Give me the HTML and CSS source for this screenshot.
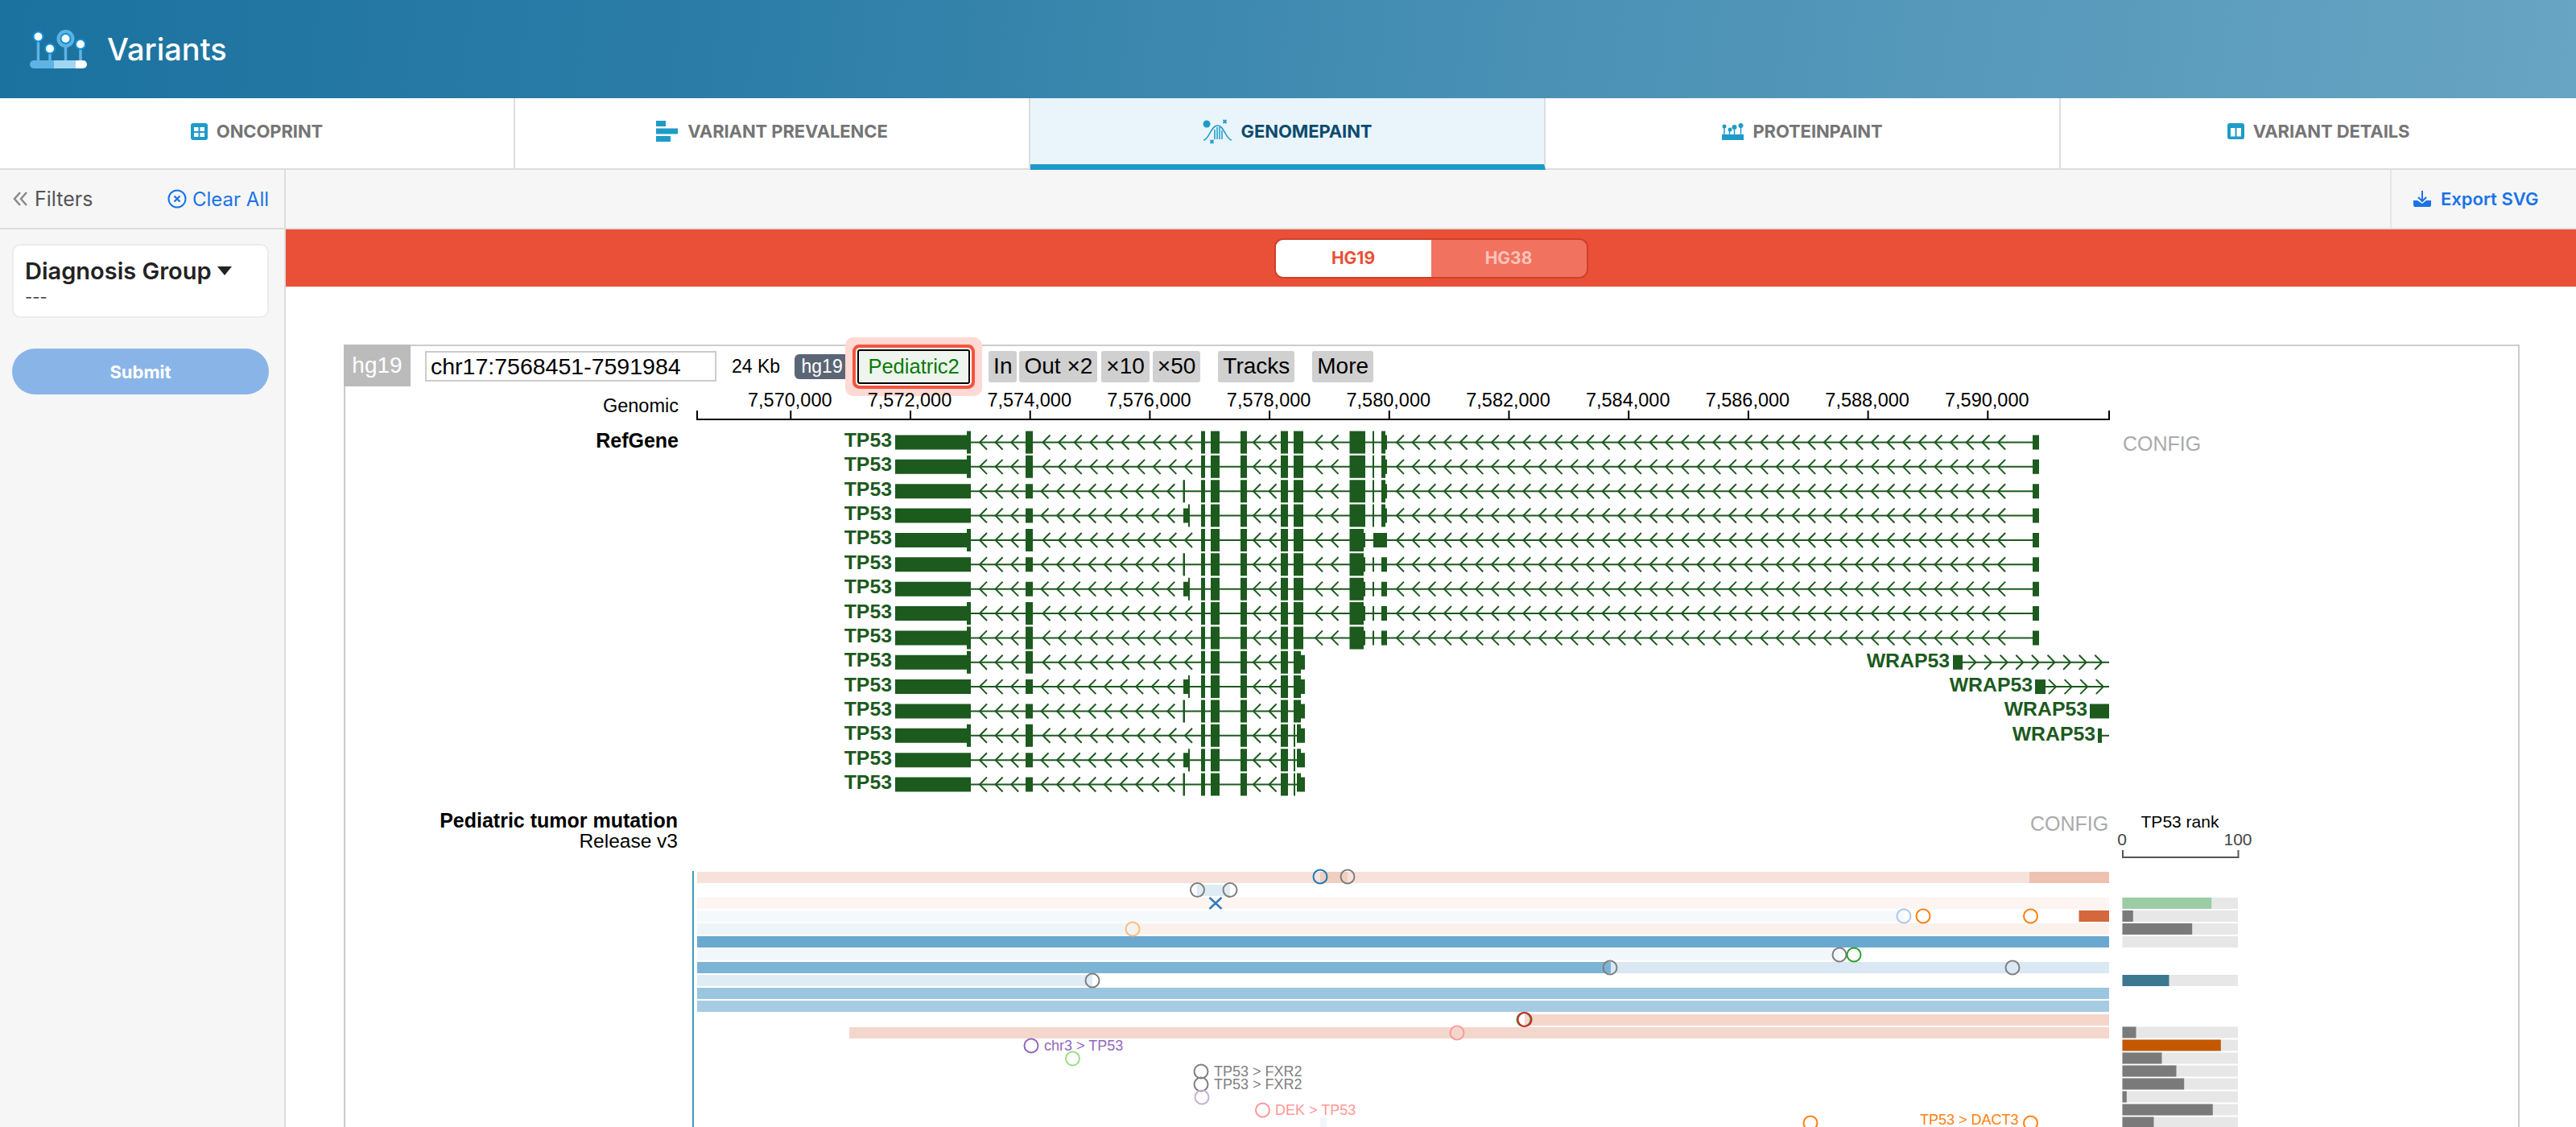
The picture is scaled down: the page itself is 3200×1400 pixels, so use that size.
FILE: index.html
```html
<!DOCTYPE html>
<html lang="en">
<head>
<meta charset="utf-8">
<title>Variants</title>
<link rel="stylesheet" href="styles.css">
</head>
<body>
<header class="app-header">
  <svg class="logo" width="72" height="48" viewBox="37 36 72 48">
    <g class="logo-stem"><path d="M47.500 48V75M62 64V75M81.500 56V75M100 60V75"/></g>
    <circle class="logo-halo" cx="81.500" cy="47" r="11"/>
    <circle class="logo-dot" cx="47.500" cy="44.500" r="6"/>
    <circle class="logo-dot" cx="62" cy="59.500" r="6"/>
    <circle class="logo-dot" cx="81.500" cy="47" r="6"/>
    <circle class="logo-dot" cx="100" cy="54" r="6"/>
    <path class="logo-a" d="M42 74H67V84H42a5 5 0 0 1 0-10Z"/>
    <rect class="logo-b" x="67" y="74" width="27" height="10"/>
    <path class="logo-c" d="M94 74H103a5 5 0 0 1 0 10H94Z"/>
  </svg>
  <h1 class="app-title">Variants</h1>
</header>

<nav class="tabs">
  <a class="tab">
    <svg class="tab-icon" width="21" height="21" viewBox="0 0 21 21"><rect class="ic-fill" width="21" height="21" rx="3"/><path class="ic-cut" d="M4 5h5.500v5H4zM11.500 5H17v5h-5.500zM4 12h5.500v5H4zM11.500 12H17v5h-5.500z"/></svg>
    <span>ONCOPRINT</span>
  </a>
  <a class="tab">
    <svg class="tab-icon" width="28" height="27" viewBox="0 0 28 27"><path class="ic-fill" d="M0 0h12v7H0zM0 9.500h27v7H0zM0 19h18v7H0z"/></svg>
    <span>VARIANT PREVALENCE</span>
  </a>
  <a class="tab tab-active">
    <svg class="tab-icon" width="37" height="31" viewBox="0 0 37 31">
      <circle class="ic-fill" cx="5" cy="6" r="4.500"/>
      <path class="ic-line" d="M1 26C8 26 10 8 18.500 8S29 26 36 26M15 13V25M18 10V25M21 10V25M24 14V25"/>
      <path class="ic-x" d="M25.500 1l4 4M29.500 1l-4 4M9.500 26l4 4M13.500 26l-4 4"/>
    </svg>
    <span>GENOMEPAINT</span>
  </a>
  <a class="tab">
    <svg class="tab-icon" width="27" height="21" viewBox="0 0 27 21">
      <path class="ic-fill" d="M0 14h27v7H0z"/>
      <path class="ic-line" d="M3 3V14M9.500 9V14M15.500 6V14M23.500 4V14"/>
      <circle class="ic-fill" cx="3" cy="4" r="2.500"/><circle class="ic-fill" cx="10" cy="8" r="2.500"/><circle class="ic-fill" cx="15.500" cy="5" r="3"/><circle class="ic-fill" cx="23.500" cy="3" r="3"/>
    </svg>
    <span>PROTEINPAINT</span>
  </a>
  <a class="tab tab-last">
    <svg class="tab-icon" width="21" height="20" viewBox="0 0 21 20"><rect class="ic-fill" width="21" height="20" rx="3"/><path class="ic-cut" d="M4 6h5.500v10.500H4zM11.500 6H17v10.500h-5.500z"/></svg>
    <span>VARIANT DETAILS</span>
  </a>
</nav>

<div class="workspace">
  <aside class="sidebar">
    <div class="filter-head">
      <span class="filter-title">
        <svg width="19" height="20" viewBox="0 0 19 20"><path class="dbl-chev" d="M9 2L2 10l7 8M17 2l-7 8 7 8"/></svg>
        Filters
      </span>
      <span class="clear-all">
        <svg width="24" height="24" viewBox="0 0 24 24"><circle class="clear-ring" cx="12" cy="12" r="10.500"/><path class="clear-x" d="M8.500 8.500l7 7M15.500 8.500l-7 7"/></svg>
        Clear All
      </span>
    </div>
    <div class="filter-body">
      <div class="filter-card">
        <div class="filter-name">Diagnosis Group<i class="caret"></i></div>
        <div class="filter-value">---</div>
      </div>
      <button class="submit">Submit</button>
    </div>
  </aside>

  <main class="content">
    <div class="action-bar">
      <span class="export">
        <svg width="22" height="20" viewBox="0 0 22 20"><path class="export-arrow" d="M11 0V12M6 8l5 5 5-5"/><path class="export-tray" d="M0 12h5l6 4 5-4h6v6a2 2 0 0 1-2 2H2a2 2 0 0 1-2-2Z"/></svg>
        Export SVG
      </span>
    </div>
    <div class="genome-band">
      <div class="genome-toggle">
        <span class="genome-opt genome-opt-on">HG19</span>
        <span class="genome-opt">HG38</span>
      </div>
    </div>
    <section class="stage">
      <div class="pp-box">
        <div class="pp-toolbar">
          <span class="pp-genome">hg19</span>
          <input class="pp-coord" value="chr17:7568451-7591984">
          <span class="pp-span">24 Kb</span>
          <span class="pp-badge">hg19</span>
          <span class="pp-ds">Pediatric2</span>
          <span class="pp-btn pp-in">In</span>
          <span class="pp-btn pp-out">Out ×2</span>
          <span class="pp-btn pp-x10">×10</span>
          <span class="pp-btn pp-x50">×50</span>
          <span class="pp-btn pp-tracks">Tracks</span>
          <span class="pp-btn pp-more">More</span>
        </div>
        <svg class="pp-chart" width="2699" height="920" viewBox="429 480 2699 920">
          <defs>
            <path id="chev3" class="gl" d="M1226-9l-9 9 9 9m19.600-18l-9 9 9 9m19.600-18l-9 9 9 9"/>
            <path id="chev9" class="gl" d="M1304.500-9l-9 9 9 9m19.600-18l-9 9 9 9m19.600-18l-9 9 9 9m19.600-18l-9 9 9 9m19.600-18l-9 9 9 9m19.600-18l-9 9 9 9m19.600-18l-9 9 9 9m19.600-18l-9 9 9 9m19.600-18l-9 9 9 9"/>
            <path id="chev-mid" class="gl" d="M1566-9l-9 9 9 9m19.600-18l-9 9 9 9"/>
            <path id="chev-long" class="gl" d="M1744-9l-9 9 9 9m19.660-18l-9 9 9 9m19.660-18l-9 9 9 9m19.660-18l-9 9 9 9m19.660-18l-9 9 9 9m19.660-18l-9 9 9 9m19.660-18l-9 9 9 9m19.660-18l-9 9 9 9m19.660-18l-9 9 9 9m19.660-18l-9 9 9 9m19.660-18l-9 9 9 9m19.660-18l-9 9 9 9m19.660-18l-9 9 9 9m19.660-18l-9 9 9 9m19.660-18l-9 9 9 9m19.660-18l-9 9 9 9m19.660-18l-9 9 9 9m19.660-18l-9 9 9 9m19.660-18l-9 9 9 9m19.660-18l-9 9 9 9m19.660-18l-9 9 9 9m19.660-18l-9 9 9 9m19.660-18l-9 9 9 9m19.660-18l-9 9 9 9m19.660-18l-9 9 9 9m19.660-18l-9 9 9 9m19.660-18l-9 9 9 9m19.660-18l-9 9 9 9m19.660-18l-9 9 9 9m19.660-18l-9 9 9 9m19.660-18l-9 9 9 9m19.660-18l-9 9 9 9m19.660-18l-9 9 9 9m19.660-18l-9 9 9 9m19.660-18l-9 9 9 9m19.660-18l-9 9 9 9m19.660-18l-9 9 9 9m19.660-18l-9 9 9 9m19.660-18l-9 9 9 9"/>

            <g id="left-a">
              <path class="gl" d="M1206 0H1482"/>
              <path class="gf" d="M1112-9H1201V-14H1206V14H1201V9H1112ZM1274-14h9V14h-9Z"/>
              <use href="#chev3"/><use href="#chev9"/>
              <path class="gl" d="M1481-9l-9 9 9 9"/>
            </g>
            <g id="left-b">
              <path class="gl" d="M1206 0H1482"/>
              <path class="gf" d="M1112-9H1206V9H1112ZM1274-9h9V9h-9ZM1469.500-14h2.500V14h-2.500Z"/>
              <use href="#chev3"/><use href="#chev9" x="-2"/>
            </g>
            <g id="left-c">
              <path class="gl" d="M1206 0H1482"/>
              <path class="gf" d="M1112-9H1206V9H1112ZM1274-9h9V9h-9ZM1470-9h6V-14h2V14h-2V9h-6Z"/>
              <use href="#chev3"/><use href="#chev9" x="-2"/>
            </g>
            <g id="mid">
              <path class="gl" d="M1482 0H1591"/>
              <path class="gf" d="M1492-14h5V14h-5ZM1504-14h11V14h-11ZM1541-14h8V14h-8ZM1591-14h9V14h-9Z"/>
              <use href="#chev-mid"/>
            </g>
            <g id="long">
              <path class="gl" d="M1600 0H2525"/>
              <path class="gf" d="M1607-14h12V14h-12ZM2525-9h8V9h-8Z"/>
              <use href="#chev-mid" x="77"/>
              <use href="#chev-long"/>
            </g>
            <g id="end-a"><path class="gf" d="M1676.500-14H1696V14H1676.500ZM1705-14h2V14h-2ZM1716-14h5V-9h2V9h-2V14h-5Z"/></g>
            <g id="end-b"><path class="gf" d="M1676.500-14H1694V-9h2V9h-2V14H1676.500ZM1706-9h17V9h-17Z"/></g>
            <g id="end-c"><path class="gf" d="M1676.500-14H1694V-9h2V9h-2V14H1676.500ZM1705-9h2V9h-2ZM1716-9h7V9h-7Z"/></g>
            <g id="short-a">
              <path class="gl" d="M1600 0H1607"/>
              <path class="gf" d="M1607-14H1616V-9H1621V9H1616V14H1607Z"/>
            </g>
            <g id="short-b">
              <path class="gl" d="M1600 0H1611"/>
              <path class="gf" d="M1607-14h2V14h-2ZM1611-14H1616V-9H1621V9H1611Z"/>
            </g>
            <text id="tp53" class="gene-name" x="1108" y="5.500">TP53</text>
          </defs>

          <!-- genomic ruler -->
          <text class="track-label" x="843" y="512">Genomic</text>
          <path class="ruler" d="M866 510V521H2620V510M982.300 510V521M1131 510V521M1279.700 510V521M1428.400 510V521M1577.100 510V521M1725.800 510V521M1874.500 510V521M2023.200 510V521M2171.900 510V521M2320.600 510V521M2469.300 510V521"/>
          <g class="ruler-text">
            <text x="981.300" y="504.500">7,570,000</text><text x="1130" y="504.500">7,572,000</text><text x="1278.700" y="504.500">7,574,000</text><text x="1427.400" y="504.500">7,576,000</text><text x="1576.100" y="504.500">7,578,000</text><text x="1724.800" y="504.500">7,580,000</text><text x="1873.500" y="504.500">7,582,000</text><text x="2022.200" y="504.500">7,584,000</text><text x="2170.900" y="504.500">7,586,000</text><text x="2319.600" y="504.500">7,588,000</text><text x="2468.300" y="504.500">7,590,000</text>
          </g>

          <!-- RefGene -->
          <text class="track-label track-label-b" x="843" y="556">RefGene</text>
          <text class="config" x="2637" y="560">CONFIG</text>
          <g transform="translate(0 549.500)"><use href="#tp53"/><use href="#left-a"/><use href="#mid"/><use href="#long"/><use href="#end-a"/></g>
          <g transform="translate(0 579.860)"><use href="#tp53"/><use href="#left-a"/><use href="#mid"/><use href="#long"/><use href="#end-a"/></g>
          <g transform="translate(0 610.220)"><use href="#tp53"/><use href="#left-b"/><use href="#mid"/><use href="#long"/><use href="#end-a"/></g>
          <g transform="translate(0 640.580)"><use href="#tp53"/><use href="#left-c"/><use href="#mid"/><use href="#long"/><use href="#end-a"/></g>
          <g transform="translate(0 670.940)"><use href="#tp53"/><use href="#left-a"/><use href="#mid"/><use href="#long"/><use href="#end-b"/></g>
          <g transform="translate(0 701.300)"><use href="#tp53"/><use href="#left-b"/><use href="#mid"/><use href="#long"/><use href="#end-c"/></g>
          <g transform="translate(0 731.660)"><use href="#tp53"/><use href="#left-c"/><use href="#mid"/><use href="#long"/><use href="#end-c"/></g>
          <g transform="translate(0 762.020)"><use href="#tp53"/><use href="#left-a"/><use href="#mid"/><use href="#long"/><use href="#end-c"/></g>
          <g transform="translate(0 792.380)"><use href="#tp53"/><use href="#left-a"/><use href="#mid"/><use href="#long"/><use href="#end-c"/></g>
          <g transform="translate(0 822.740)"><use href="#tp53"/><use href="#left-a"/><use href="#mid"/><use href="#short-a"/>
            <text class="gene-name" x="2422" y="6">WRAP53</text>
            <path class="gf" d="M2426-9h12V9h-12Z"/>
            <path class="gl" d="M2438 0H2620M2445.500-9l9 9-9 9m19.600-18l9 9-9 9m19.600-18l9 9-9 9m19.600-18l9 9-9 9m19.600-18l9 9-9 9m19.600-18l9 9-9 9m19.600-18l9 9-9 9m19.600-18l9 9-9 9m19.600-18l9 9-9 9"/>
          </g>
          <g transform="translate(0 853.100)"><use href="#tp53"/><use href="#left-c"/><use href="#mid"/><use href="#short-a"/>
            <text class="gene-name" x="2525" y="6">WRAP53</text>
            <path class="gf" d="M2528-9h13V9h-13Z"/>
            <path class="gl" d="M2541 0H2620M2545-9l9 9-9 9m19.600-18l9 9-9 9m19.600-18l9 9-9 9m19.600-18l9 9-9 9"/>
          </g>
          <g transform="translate(0 883.460)"><use href="#tp53"/><use href="#left-b"/><use href="#mid"/><use href="#short-a"/>
            <text class="gene-name" x="2593" y="6">WRAP53</text>
            <path class="gf" d="M2596-9h24V9h-24Z"/>
          </g>
          <g transform="translate(0 913.820)"><use href="#tp53"/><use href="#left-a"/><use href="#mid"/><use href="#short-b"/>
            <text class="gene-name" x="2603" y="6">WRAP53</text>
            <path class="gf" d="M2606-9h5V9h-5Z"/>
            <path class="gl" d="M2611 0H2620"/>
          </g>
          <g transform="translate(0 944.180)"><use href="#tp53"/><use href="#left-c"/><use href="#mid"/><use href="#short-b"/></g>
          <g transform="translate(0 974.540)"><use href="#tp53"/><use href="#left-b"/><use href="#mid"/><use href="#short-b"/></g>

          <!-- mutation track -->
          <text class="track-label track-label-b" x="842" y="1028">Pediatric tumor mutation</text>
          <text class="track-label track-label-r" x="842" y="1053">Release v3</text>
          <text class="config" x="2522" y="1032">CONFIG</text>
          <path class="track-axis" d="M861 1082V1400"/>

          <rect class="r1" x="866" y="1083" width="1754" height="14"/>
          <rect class="r1d" x="1640" y="1083" width="34" height="14"/>
          <rect class="r1e" x="2521" y="1083" width="99" height="14"/>
          <rect class="r2" x="1487" y="1099" width="41" height="14"/>
          <rect class="r3" x="866" y="1115" width="1754" height="14"/>
          <rect class="r4" x="866" y="1131" width="1499" height="14"/>
          <rect class="r4e" x="2582.500" y="1131" width="37.500" height="14"/>
          <rect class="r5a" x="866" y="1147" width="541" height="14"/>
          <rect class="r5b" x="1407" y="1147" width="1213" height="14"/>
          <rect class="r6" x="866" y="1163" width="1754" height="14"/>
          <rect class="r7" x="866" y="1179" width="1419" height="14"/>
          <rect class="r8a" x="866" y="1195" width="1135" height="14"/>
          <rect class="r8b" x="2001" y="1195" width="619" height="14"/>
          <rect class="r9" x="866" y="1211" width="491" height="14"/>
          <rect class="r10" x="866" y="1227" width="1754" height="14"/>
          <rect class="r11" x="866" y="1243" width="1754" height="14"/>
          <rect class="r12" x="1894" y="1260" width="726" height="14"/>
          <rect class="r13" x="1055" y="1276" width="1565" height="14"/>
          <rect class="r20" x="1640" y="1388" width="8" height="12"/>

          <path class="mark-x" d="M1502.500 1115L1517.500 1129M1517.500 1115L1502.500 1129"/>

          <circle class="c c-blue" cx="1640" cy="1089" r="8.500"/>
          <circle class="c c-gray" cx="1674" cy="1089" r="8.500"/>
          <circle class="c c-gray" cx="1487.500" cy="1105.500" r="8.500"/>
          <circle class="c c-gray" cx="1528" cy="1105.500" r="8.500"/>
          <circle class="c c-lblue" cx="2365" cy="1138" r="8.500"/>
          <circle class="c c-orange" cx="2389" cy="1138" r="8.500"/>
          <circle class="c c-orange" cx="2522.500" cy="1138" r="8.500"/>
          <circle class="c c-lorange" cx="1407" cy="1154" r="8.500"/>
          <circle class="c c-gray" cx="2285" cy="1186" r="8.500"/>
          <circle class="c c-green" cx="2303" cy="1186" r="8.500"/>
          <circle class="c c-gray" cx="2000" cy="1202" r="8.500"/>
          <circle class="c c-gray" cx="2500" cy="1202" r="8.500"/>
          <circle class="c c-gray" cx="1357" cy="1218" r="8.500"/>
          <circle class="c c-green" cx="1893" cy="1266.500" r="8.500"/>
          <circle class="c c-red" cx="1894" cy="1266.500" r="8.500"/>
          <circle class="c c-pink" cx="1810" cy="1283" r="8.500"/>
          <circle class="c c-purple" cx="1281" cy="1299" r="8.500"/>
          <circle class="c c-lgreen" cx="1332.500" cy="1315" r="8.500"/>
          <circle class="c c-gray" cx="1492" cy="1331" r="8.500"/>
          <circle class="c c-gray" cx="1492" cy="1347" r="8.500"/>
          <circle class="c c-lpurple" cx="1493" cy="1363" r="8.500"/>
          <circle class="c c-pink" cx="1568.500" cy="1379" r="8.500"/>
          <circle class="c c-orange" cx="2249" cy="1395" r="8.500"/>
          <circle class="c c-orange" cx="2522.500" cy="1395" r="8.500"/>

          <text class="fusion t-purple" x="1297" y="1305">chr3 &gt; TP53</text>
          <text class="fusion t-gray" x="1508" y="1337">TP53 &gt; FXR2</text>
          <text class="fusion t-gray" x="1508" y="1353">TP53 &gt; FXR2</text>
          <text class="fusion t-pink" x="1584" y="1385">DEK &gt; TP53</text>
          <text class="fusion t-orange" x="2385" y="1397">TP53 &gt; DACT3</text>

          <!-- rank column -->
          <text class="rank-title" x="2708" y="1028">TP53 rank</text>
          <text class="rank-scale" x="2636" y="1050">0</text>
          <text class="rank-scale" x="2780" y="1050">100</text>
          <path class="rank-axis" d="M2637 1056V1065H2780.500V1056"/>

          <g class="rank-bg">
            <rect x="2636.500" y="1115" width="143.500" height="14"/><rect x="2636.500" y="1131" width="143.500" height="14"/><rect x="2636.500" y="1147" width="143.500" height="14"/><rect x="2636.500" y="1163" width="143.500" height="14"/><rect x="2636.500" y="1211" width="143.500" height="14"/><rect x="2636.500" y="1275.500" width="143.500" height="14"/><rect x="2636.500" y="1291.500" width="143.500" height="14"/><rect x="2636.500" y="1307.500" width="143.500" height="14"/><rect x="2636.500" y="1323.500" width="143.500" height="14"/><rect x="2636.500" y="1339.500" width="143.500" height="14"/><rect x="2636.500" y="1355.500" width="143.500" height="14"/><rect x="2636.500" y="1371.500" width="143.500" height="14"/><rect x="2636.500" y="1387.500" width="143.500" height="13"/>
          </g>
          <rect class="rank-green" x="2636.500" y="1115" width="110.700" height="14"/>
          <rect class="rank-gray" x="2636.500" y="1131" width="13.300" height="14"/>
          <rect class="rank-gray" x="2636.500" y="1147" width="86.700" height="14"/>
          <rect class="rank-teal" x="2636.500" y="1211" width="58" height="14"/>
          <rect class="rank-gray" x="2636.500" y="1275.500" width="17" height="14"/>
          <rect class="rank-orange" x="2636.500" y="1291.500" width="122.300" height="14"/>
          <rect class="rank-gray" x="2636.500" y="1307.500" width="49" height="14"/>
          <rect class="rank-gray" x="2636.500" y="1323.500" width="67" height="14"/>
          <rect class="rank-gray" x="2636.500" y="1339.500" width="76.700" height="14"/>
          <rect class="rank-gray" x="2636.500" y="1355.500" width="5.300" height="14"/>
          <rect class="rank-gray" x="2636.500" y="1371.500" width="112.300" height="14"/>
          <rect class="rank-gray" x="2636.500" y="1387.500" width="39" height="13"/>
        </svg>
      </div>
    </section>
  </main>
</div>
</body>
</html>
```
FILE: styles.css
```css
* { box-sizing: border-box; }
html, body { margin: 0; padding: 0; }
body {
  width: 3200px;
  height: 1400px;
  overflow: hidden;
  background: #fff;
  font-family: Inter, "Liberation Sans", sans-serif;
}

/* header */
.app-header {
  height: 122px;
  padding-left: 37px;
  display: flex;
  align-items: center;
  background: linear-gradient(97deg, #1b729f 0%, #2d7ea8 30%, #4a91b5 60%, #68a4c3 100%);
}
.logo { display: block; }
.logo-stem path { stroke: #5eb3e4; stroke-width: 3.500; fill: none; }
.logo-halo { fill: #5eb3e4; }
.logo-dot { fill: #fff; stroke: #0d8fd6; stroke-width: 2; }
.logo-a { fill: #5eb3e4; }
.logo-b { fill: #a3d5f5; }
.logo-c { fill: #fff; }
.app-title {
  margin: 0 0 0 24px;
  font-size: 38px;
  font-weight: 500;
  color: #fff;
}

/* tabs */
.tabs {
  display: flex;
  height: 89px;
  border-bottom: 2px solid #ddd;
  background: #fff;
}
.tab {
  flex: 0 0 640px;
  display: flex;
  align-items: center;
  justify-content: center;
  gap: 11px;
  padding-bottom: 5px;
  border-right: 2px solid #ddd;
  font-size: 22px;
  font-weight: 700;
  letter-spacing: -0.1px;
  color: #757575;
}
.tab-last { border-right: 0; }
.tab-active {
  height: 89px;
  padding-bottom: 0;
  background: #e9f5fb;
  color: #0e4a6e;
  border-bottom: 7px solid #1b9ac9;
}
.tab-icon { display: block; flex: none; }
.ic-fill { fill: #1f9bc7; }
.ic-cut { fill: #fff; }
.ic-line { stroke: #1f9bc7; stroke-width: 1.500; fill: none; }
.ic-x { stroke: #1f9bc7; stroke-width: 1.800; fill: none; }

/* workspace */
.workspace { display: flex; height: 1189px; }
.sidebar {
  flex: 0 0 355px;
  background: #f6f6f7;
  border-right: 2px solid #ddd;
}
.filter-head {
  height: 74px;
  padding: 0 19px 0 16px;
  display: flex;
  align-items: center;
  justify-content: space-between;
  border-bottom: 2px solid #ddd;
}
.filter-title {
  display: flex;
  align-items: center;
  gap: 8px;
  font-size: 25px;
  color: #555;
}
.dbl-chev { fill: none; stroke: #8a8a8a; stroke-width: 2.500; }
.clear-all {
  display: flex;
  align-items: center;
  gap: 7px;
  font-size: 24px;
  color: #1a73e8;
}
.clear-ring { fill: none; stroke: #1a73e8; stroke-width: 2; }
.clear-x { fill: none; stroke: #1a73e8; stroke-width: 2.200; }
.filter-body { padding: 18px 19px 0 15px; }
.filter-card {
  height: 92px;
  padding: 14px 14px 0;
  background: #fff;
  border: 2px solid #ebebef;
  border-radius: 10px;
}
.filter-name {
  display: flex;
  align-items: center;
  font-size: 29px;
  font-weight: 600;
  color: #222;
}
.caret {
  margin-left: 7px;
  width: 0;
  height: 0;
  border-left: 9px solid transparent;
  border-right: 9px solid transparent;
  border-top: 11px solid #222;
}
.filter-value { margin-top: 3px; font-size: 20px; color: #444; line-height: 24px; }
.submit {
  display: block;
  width: 319px;
  height: 57px;
  margin: 38px 0 0 0;
  border: 0;
  border-radius: 29px;
  background: #89b4e8;
  color: #fff;
  font-family: inherit;
  font-size: 22px;
  font-weight: 700;
}

/* content */
.content { flex: 1; min-width: 0; }
.action-bar {
  height: 74px;
  display: flex;
  justify-content: flex-end;
  background: #f6f6f6;
  border-bottom: 2px solid #ddd;
}
.export {
  width: 231px;
  padding-left: 27px;
  display: flex;
  align-items: center;
  gap: 12px;
  border-left: 2px solid #e6e6e6;
  font-size: 22px;
  font-weight: 600;
  color: #1a73e8;
}
.export-arrow { fill: none; stroke: #1a73e8; stroke-width: 2; }
.export-tray { fill: #1a73e8; }
.genome-band {
  height: 71px;
  display: flex;
  align-items: center;
  justify-content: center;
  background: #ea4f37;
}
.genome-toggle {
  width: 390px;
  height: 50px;
  display: flex;
  overflow: hidden;
  border: 2px solid #cf4029;
  border-radius: 11px;
  background: #f27260;
}
.genome-opt {
  flex: 1;
  display: flex;
  align-items: center;
  justify-content: center;
  font-size: 21px;
  font-weight: 700;
  color: #fac4ba;
}
.genome-opt-on { background: #fff; color: #ea4f37; }

/* proteinpaint block */
.stage { padding: 72px 70px 0 72px; }
.pp-box {
  width: 2703px;
  height: 1000px;
  border: 2px solid #ccc;
  font-family: "Liberation Sans", Arial, sans-serif;
}
.pp-toolbar {
  height: 50px;
  display: flex;
  align-items: center;
  color: #000;
}
.pp-genome {
  align-self: flex-start;
  width: 83px;
  height: 52px;
  margin: -2px 0 0 -2px;
  display: flex;
  align-items: center;
  justify-content: center;
  background: #bbb;
  color: #fff;
  font-size: 28px;
}
.pp-coord {
  width: 362px;
  height: 38px;
  margin-left: 18px;
  padding: 0 5px;
  border: 2px solid #ccc;
  font-family: inherit;
  font-size: 28.500px;
  color: #000;
  outline: 0;
}
.pp-span { margin-left: 19px; font-size: 23px; }
.pp-badge {
  margin-left: 18px;
  height: 31px;
  width: 68px;
  display: flex;
  align-items: center;
  justify-content: center;
  background: #5a6675;
  border-radius: 6px;
  color: #fff;
  font-size: 23px;
}
.pp-ds {
  width: 140px;
  height: 43px;
  margin-left: 10px;
  display: flex;
  align-items: center;
  justify-content: center;
  background: #eef5ee;
  border: 2px solid #000;
  color: #0a7a0a;
  font-size: 25.500px;
  box-shadow: 0 0 0 2px #fff, 0 0 0 6px #f5533d, 0 0 0 15px #ffd9d3;
  border-radius: 3px;
}
.pp-btn {
  height: 39px;
  padding: 0 6px;
  display: flex;
  align-items: center;
  background: #d0d0d0;
  border-radius: 3px;
  font-size: 28px;
}
.pp-in { margin-left: 23px; }
.pp-out { margin-left: 3px; }
.pp-x10 { margin-left: 5px; }
.pp-x50 { margin-left: 4px; }
.pp-tracks { margin-left: 22px; }
.pp-more { margin-left: 22px; }
.pp-chart { display: block; font-family: "Liberation Sans", Arial, sans-serif; }

/* gene track */
.gf { fill: #1c5a1e; }
.gl { fill: none; stroke: #1c5a1e; stroke-width: 2; }
.gene-name { fill: #1c5a1e; font-size: 24.800px; font-weight: 700; text-anchor: end; }
.track-label { font-size: 23.500px; fill: #000; text-anchor: end; }
.track-label-b { font-size: 25px; font-weight: 700; }
.track-label-r { font-size: 24.500px; }
.config { font-size: 25px; fill: #aaa; }
.ruler { fill: none; stroke: #000; stroke-width: 2; }
.ruler-text text { font-size: 23.500px; fill: #000; text-anchor: middle; }
.track-axis { stroke: #3d9ab5; stroke-width: 2; fill: none; }

/* mutation rows */
.r1 { fill: #f6e2da; }
.r1d { fill: #f0cfc0; }
.r1e { fill: #eec2b1; }
.r2 { fill: #dfecf4; }
.r3 { fill: #fef4f1; }
.r4 { fill: #f4f9fc; }
.r4e { fill: #d4673b; }
.r5a { fill: #eef5f9; }
.r5b { fill: #fbf1ec; }
.r6 { fill: #69a9d0; }
.r7 { fill: #f2f7fb; }
.r8a { fill: #7cb4d6; }
.r8b { fill: #d9e8f3; }
.r9 { fill: #dfecf4; }
.r10 { fill: #9bc6e0; }
.r11 { fill: #a6cce3; }
.r12 { fill: #f4d6cb; }
.r13 { fill: #f4d7cc; }
.r20 { fill: #f0f6fb; }
.mark-x { fill: none; stroke: #2f7cc0; stroke-width: 2.500; }
.c { fill: none; stroke-width: 2; }
.c-blue { stroke: #1f77b4; }
.c-gray { stroke: #7f7f7f; }
.c-lblue { stroke: #aec7e8; }
.c-orange { stroke: #ff7f0e; }
.c-lorange { stroke: #ffbb78; }
.c-green { stroke: #2ca02c; }
.c-red { stroke: #d62728; }
.c-pink { stroke: #ff9896; }
.c-purple { stroke: #9467bd; }
.c-lgreen { stroke: #98df8a; }
.c-lpurple { stroke: #c5b0d5; }
.fusion { font-size: 18px; }
.t-purple { fill: #9467bd; }
.t-gray { fill: #7f7f7f; }
.t-pink { fill: #ff9896; }
.t-orange { fill: #ff7f0e; }

/* rank column */
.rank-title { font-size: 21px; fill: #000; text-anchor: middle; }
.rank-scale { font-size: 21px; fill: #444; text-anchor: middle; }
.rank-axis { fill: none; stroke: #555; stroke-width: 2; }
.rank-bg rect { fill: #e7e7e7; }
.rank-green { fill: #9bcda4; }
.rank-gray { fill: #7a7a7a; }
.rank-teal { fill: #3c7991; }
.rank-orange { fill: #c45800; }
```
